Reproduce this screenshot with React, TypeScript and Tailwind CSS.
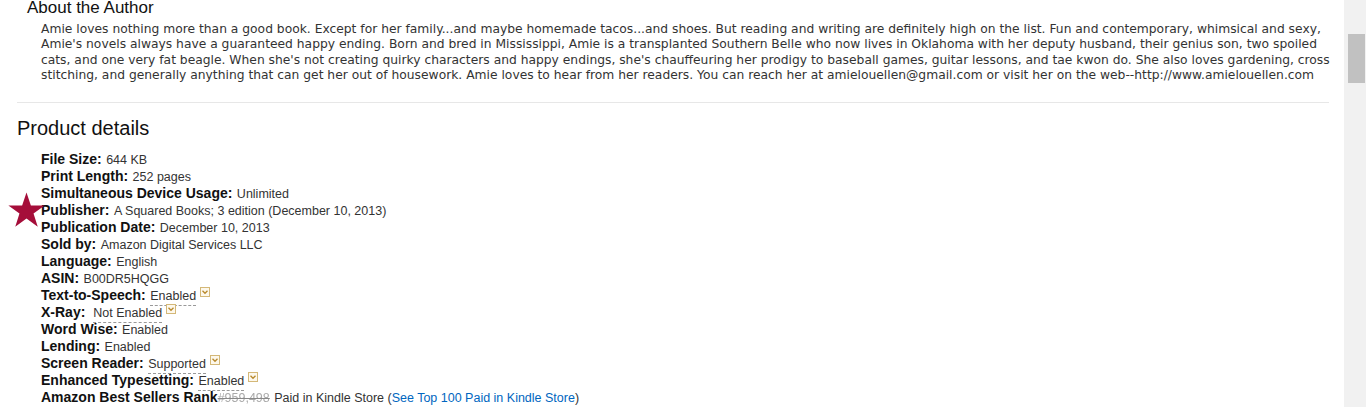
import React from "react";

const aboutLines = [
  "Amie loves nothing more than a good book. Except for her family...and maybe homemade tacos...and shoes. But reading and writing are definitely high on the list. Fun and contemporary, whimsical and sexy,",
  "Amie's novels always have a guaranteed happy ending. Born and bred in Mississippi, Amie is a transplanted Southern Belle who now lives in Oklahoma with her deputy husband, their genius son, two spoiled",
  "cats, and one very fat beagle. When she's not creating quirky characters and happy endings, she's chauffeuring her prodigy to baseball games, guitar lessons, and tae kwon do. She also loves gardening, cross",
  "stitching, and generally anything that can get her out of housework. Amie loves to hear from her readers. You can reach her at amielouellen@gmail.com or visit her on the web--http://www.amielouellen.com",
];

function Caret() {
  return (
    <svg width="10" height="10" viewBox="0 0 10 10" className="ml-[4px] inline-block align-top mt-[1px]">
      <rect x="0.5" y="0.5" width="9" height="9" fill="#fdf8ec" stroke="#d4b878" />
      <path d="M2.5 3.8 L5 6.3 L7.5 3.8" fill="none" stroke="#b8892c" strokeWidth="1.3" />
    </svg>
  );
}

function Row({ label, children }: { label: string; children: React.ReactNode }) {
  return (
    <li className="h-[17px] leading-[17px] whitespace-nowrap">
      <b className="text-[14px] font-bold text-[#111]">{label}</b>{" "}
      <span className="text-[12.5px] text-[#333]">{children}</span>
    </li>
  );
}

function Dashed({ children }: { children: React.ReactNode }) {
  return <span className="border-b border-dashed border-[#999] pb-[2px]">{children}</span>;
}

export default function App() {
  return (
    <div className="relative flex h-[407px] w-[1366px] overflow-hidden bg-white">
      <div className="w-[1344px] pr-[15px]">
        <h2 className="-mt-[2px] ml-[27px] h-[20px] text-[17px] leading-[20px] text-[#111]" style={{ fontFamily: "Arial, 'Liberation Sans', sans-serif" }}>
          About the Author
        </h2>
        <div className="ml-[41px] mt-[4px] text-[12.3px] leading-[15.4px] text-[#333]" style={{ fontFamily: "Verdana, 'DejaVu Sans', sans-serif" }}>
          {aboutLines.map((l) => (
            <div key={l} className="whitespace-nowrap">{l}</div>
          ))}
        </div>
        <div className="ml-[17px] mt-[18px] h-px bg-[#e7e7e7]" />
        <div style={{ fontFamily: "Arial, 'Liberation Sans', sans-serif" }}>
          <h2 className="ml-[17px] mt-[13px] h-[24px] text-[20px] leading-[24px] text-[#111]">Product details</h2>
          <ul className="ml-[41px] mt-[10px]">
            <Row label="File Size:">644 KB</Row>
            <Row label="Print Length:">252 pages</Row>
            <Row label="Simultaneous Device Usage:">Unlimited</Row>
            <Row label="Publisher:">A Squared Books; 3 edition (December 10, 2013)</Row>
            <Row label="Publication Date:">December 10, 2013</Row>
            <Row label="Sold by:">Amazon Digital Services LLC</Row>
            <Row label="Language:">English</Row>
            <Row label="ASIN:">B00DR5HQGG</Row>
            <Row label="Text-to-Speech:">
              <Dashed>Enabled</Dashed>
              <Caret />
            </Row>
            <Row label="X-Ray:">
              {"\u00a0"}
              <Dashed>Not Enabled</Dashed>
              <Caret />
            </Row>
            <Row label="Word Wise:">Enabled</Row>
            <Row label="Lending:">Enabled</Row>
            <Row label="Screen Reader:">
              <Dashed>Supported</Dashed>
              <Caret />
            </Row>
            <Row label="Enhanced Typesetting:">
              <Dashed>Enabled</Dashed>
              <Caret />
            </Row>
            <li className="h-[17px] leading-[17px] whitespace-nowrap">
              <b className="text-[14px] font-bold text-[#111]">Amazon Best Sellers Rank</b>
              <span className="text-[12.5px] text-[#aaa] line-through decoration-[#888] blur-[0.4px]">#959,498</span>{" "}
              <span className="text-[12.5px] text-[#333]">
                Paid in Kindle Store (<span className="text-[#0066c0]">See Top 100 Paid in Kindle Store</span>)
              </span>
            </li>
          </ul>
        </div>
      </div>
      <div className="h-full w-[22px] bg-[#f1f1f1] pl-[4px] pt-[34px]">
        <div className="h-[49px] w-[17px] bg-[#c1c1c1]" />
      </div>
      <svg className="absolute left-[8px] top-[192px]" width="37" height="36" viewBox="0 0 100 95">
        <polygon
          points="50,0 61.8,35.3 99,35.3 69,57.2 80.4,92.7 50,70.8 19.6,92.7 31,57.2 1,35.3 38.2,35.3"
          fill="#a50e3a"
        />
      </svg>
    </div>
  );
}
